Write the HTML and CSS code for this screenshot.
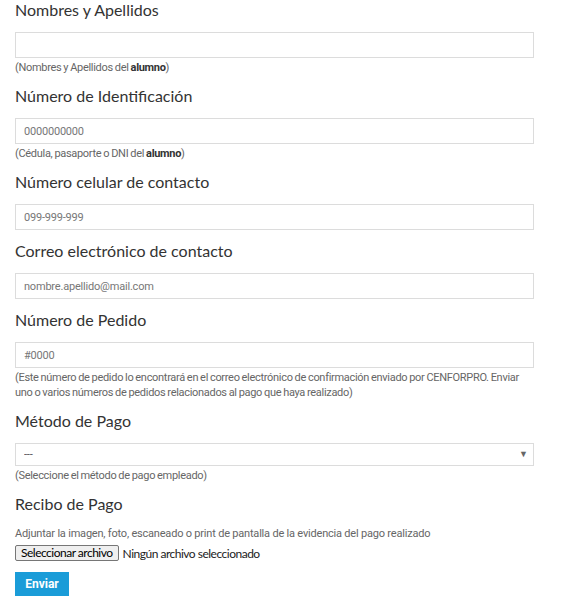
FILE: index.html
```html
<!DOCTYPE html>
<html lang="es">
<head>
    <meta charset="UTF-8">
    <meta name="viewport" content="width=device-width, initial-scale=1.0">
    <title>Reporte de Pago</title>
    <link rel="stylesheet" href="styles.css">
</head>
<body>
    <form class="pago-form">
        <div class="field">
            <label class="field-label">Nombres y Apellidos</label>
            <input type="text" class="field-input">
            <p class="field-help">(Nombres y Apellidos del <strong>alumno</strong>)</p>
        </div>

        <div class="field">
            <label class="field-label">Número de Identificación</label>
            <input type="text" class="field-input" placeholder="0000000000">
            <p class="field-help">(Cédula, pasaporte o DNI del <strong>alumno</strong>)</p>
        </div>

        <div class="field">
            <label class="field-label">Número celular de contacto</label>
            <input type="text" class="field-input" placeholder="099-999-999">
        </div>

        <div class="field">
            <label class="field-label">Correo electrónico de contacto</label>
            <input type="text" class="field-input" placeholder="nombre.apellido@mail.com">
        </div>

        <div class="field">
            <label class="field-label">Número de Pedido</label>
            <input type="text" class="field-input" placeholder="#0000">
            <p class="field-help">(Este número de pedido lo encontrará en el correo electrónico de confirmación enviado por CENFORPRO. Enviar uno o varios números de pedidos relacionados al pago que haya realizado)</p>
        </div>

        <div class="field">
            <label class="field-label">Método de Pago</label>
            <div class="select-wrap">
                <select class="field-input field-select">
                    <option>---</option>
                </select>
                <span class="select-arrow">&#9660;</span>
            </div>
            <p class="field-help">(Seleccione el método de pago empleado)</p>
        </div>

        <div class="field">
            <label class="field-label">Recibo de Pago</label>
            <p class="field-desc">Adjuntar la imagen, foto, escaneado o print de pantalla de la evidencia del pago realizado</p>
            <div class="file-row">
                <button type="button" class="file-btn">Seleccionar archivo</button>
                <span class="file-name">Ningún archivo seleccionado</span>
            </div>
        </div>

        <button type="submit" class="submit-btn">Enviar</button>
    </form>
</body>
</html>
```

FILE: styles.css
```css
/* Formulario de reporte de pago */
body {
    margin: 0;
    padding: 0;
    background: #fff;
    color: #333;
    font-family: 'Lato', sans-serif;
}

.pago-form {
    width: 519px;
    padding: 0 0 0 15px;
}

.field {
    margin-bottom: 11px;
}

.field-label {
    display: block;
    font-size: 16px;
    line-height: 20px;
    color: #333;
    margin-bottom: 12px;
}

.field-input {
    display: block;
    box-sizing: border-box;
    width: 519px;
    height: 26px;
    margin: 0;
    padding: 0 8px;
    border: 1px solid #dcdcdc;
    border-radius: 0;
    background: #fff;
    font-family: 'Roboto', sans-serif;
    font-size: 11px;
    letter-spacing: -0.2px;
    color: #555;
    outline: none;
}

.field-input::placeholder {
    color: #777;
}

.select-wrap {
    position: relative;
}

.field-select {
    height: 23px;
    appearance: none;
    -webkit-appearance: none;
    color: #555;
}

.select-arrow {
    position: absolute;
    right: 6px;
    top: 5px;
    font-size: 9px;
    color: #666;
}

.field-help {
    margin: 2px 0 0;
    font-family: 'Roboto', sans-serif;
    font-size: 11px;
    line-height: 15px;
    letter-spacing: -0.3px;
    word-spacing: -0.5px;
    color: #666;
}

.field-help strong {
    color: #333;
    font-weight: bold;
}

.field-desc {
    margin: 0 0 4px;
    font-family: 'Roboto', sans-serif;
    font-size: 11px;
    line-height: 15px;
    letter-spacing: -0.2px;
    color: #666;
}

.file-row {
    display: flex;
    align-items: center;
    gap: 4px;
}

.file-btn {
    font-family: 'Lato', sans-serif;
    font-size: 12px;
    letter-spacing: -0.5px;
    height: 16px;
    padding: 0 5px;
    background: #efefef;
    border: 1px solid #767676;
    border-radius: 2px;
    color: #000;
    line-height: 14px;
}

.file-name {
    font-family: 'Lato', sans-serif;
    font-size: 12px;
    letter-spacing: -0.5px;
    color: #222;
}

.submit-btn {
    display: block;
    margin-top: 0;
    width: 54px;
    height: 24px;
    padding: 0;
    border: none;
    background-color: #1a9cd8;
    color: #fff;
    font-family: 'Roboto', sans-serif;
    font-size: 12px;
    font-weight: bold;
    cursor: pointer;
}
```
